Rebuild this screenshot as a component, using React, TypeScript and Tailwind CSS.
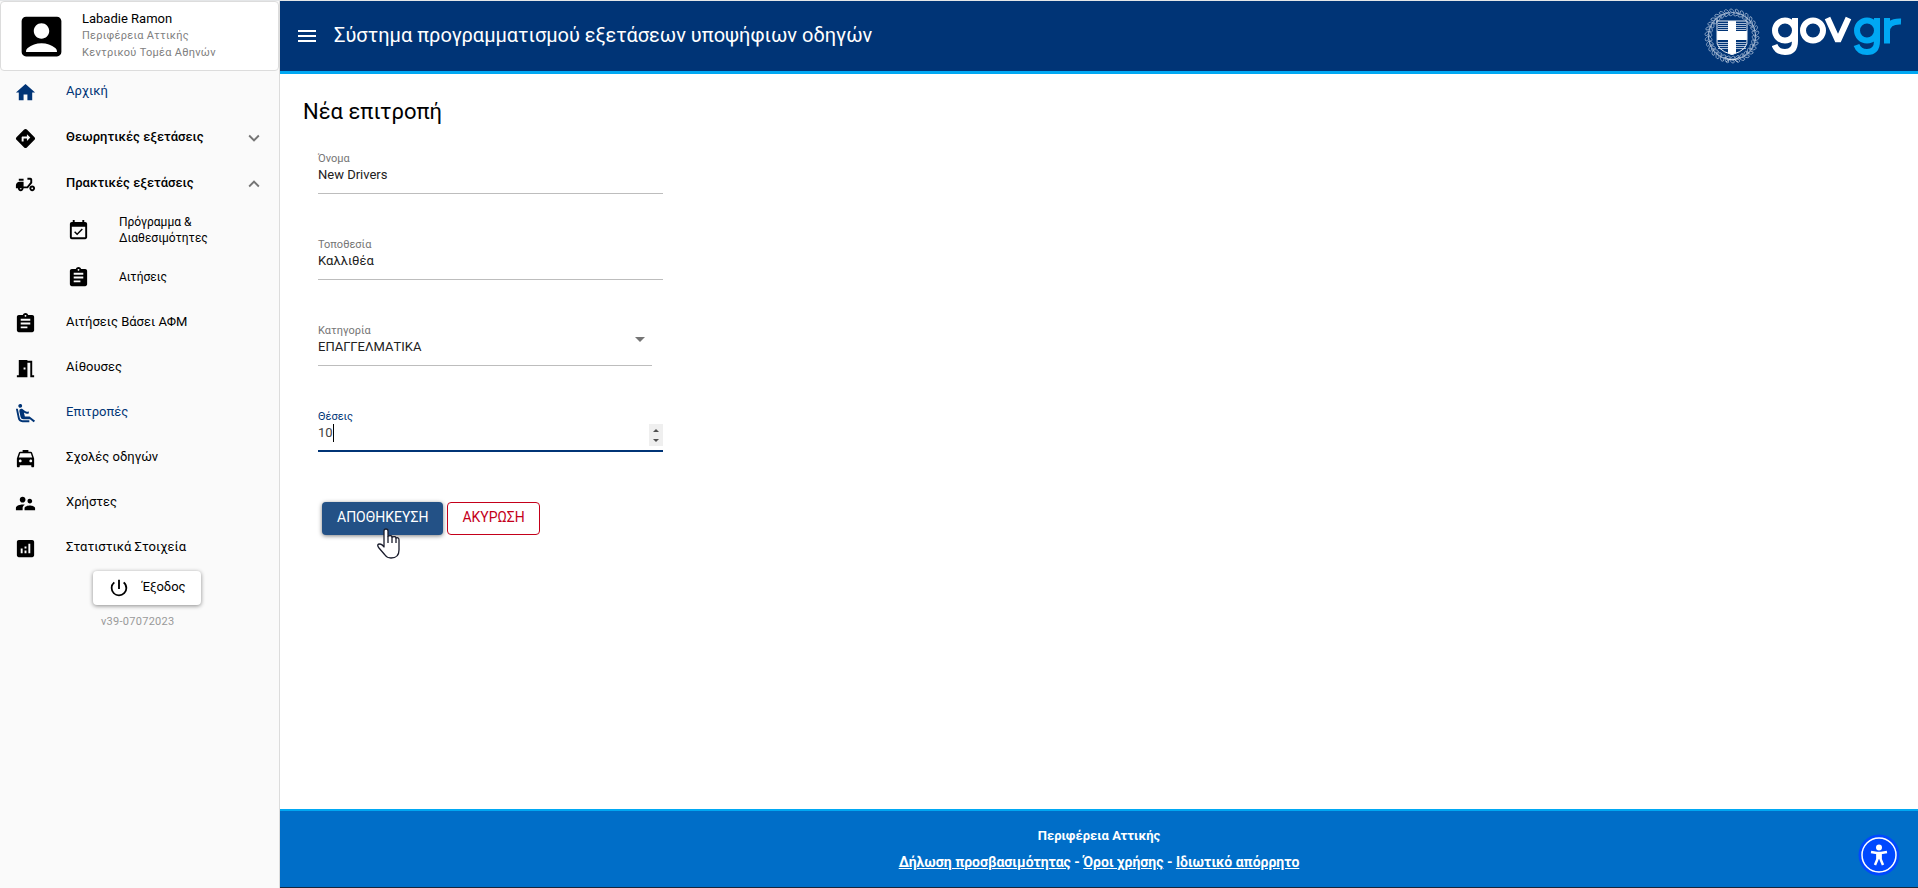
import { useState } from 'react';
import type { ReactNode } from 'react';
import type { IconType } from 'react-icons';
import {
  MdAccountBox, MdAirlineSeatReclineExtra, MdAnalytics, MdAssignment, MdDeliveryDining, MdDirections, MdEventAvailable,
  MdHome, MdKeyboardArrowDown, MdKeyboardArrowUp, MdLocalTaxi, MdMeetingRoom, MdMenu, MdPowerSettingsNew, MdSupervisorAccount,
} from 'react-icons/md';

type NavEntry = { icon: IconType; label: string; active?: boolean };

const mainLinks: NavEntry[] = [
  { icon: MdAssignment, label: 'Αιτήσεις Βάσει ΑΦΜ' },
  { icon: MdMeetingRoom, label: 'Αίθουσες' },
  { icon: MdAirlineSeatReclineExtra, label: 'Επιτροπές', active: true },
  { icon: MdLocalTaxi, label: 'Σχολές οδηγών' },
  { icon: MdSupervisorAccount, label: 'Χρήστες' },
  { icon: MdAnalytics, label: 'Στατιστικά Στοιχεία' },
];

const practicalLinks: NavEntry[] = [
  { icon: MdEventAvailable, label: 'Πρόγραμμα & Διαθεσιμότητες' },
  { icon: MdAssignment, label: 'Αιτήσεις' },
];

function NavLink({ icon: Icon, label, active }: NavEntry) {
  return (
    <a href="#" className={`flex h-[45px] items-center pl-[14px] ${active ? 'text-[#003476]' : 'text-black'}`}>
      <Icon size={23} className="mr-[29px] shrink-0" />
      <span className="pb-1">{label}</span>
    </a>
  );
}

function NavGroup({ icon: Icon, label, open, onToggle }: { icon: IconType; label: string; open: boolean; onToggle: () => void }) {
  const Arrow = open ? MdKeyboardArrowUp : MdKeyboardArrowDown;
  return (
    <button type="button" onClick={onToggle} aria-expanded={open} className="flex h-[46px] w-full items-center pr-[14px] pl-[14px] text-left font-medium">
      <Icon size={23} className="mr-[29px] shrink-0" />
      <span className="grow pb-0.5">{label}</span>
      <Arrow size={22} className="text-[#757575]" />
    </button>
  );
}

function SubLinks() {
  return (
    <>
      {practicalLinks.map(({ icon: Icon, label }) => (
        <a key={label} href="#" className="flex h-[47px] items-center pl-[67px] text-[12px] leading-4">
          <Icon size={23} className="mr-[29px] shrink-0" />
          <span className="w-28 pb-0.5">{label}</span>
        </a>
      ))}
    </>
  );
}

function Sidebar() {
  const [theory, setTheory] = useState(false);
  const [practical, setPractical] = useState(true);

  return (
    <aside className="w-[280px] shrink-0 border-r border-[#dcdcdc] bg-[#fafafa] text-[13px] text-black">
      <div className="flex h-[70px] items-center rounded border border-[#dcdcdc] bg-white pl-[14px]">
        <MdAccountBox size={53} className="mr-[14px] shrink-0" />
        <div className="pb-0.5 text-[11px] leading-[17px] tracking-wide text-[#808080]">
          <p className="text-[13px] tracking-normal text-black">Labadie Ramon</p>
          <p>Περιφέρεια Αττικής</p>
          <p>Κεντρικού Τομέα Αθηνών</p>
        </div>
      </div>
      <nav className="-mt-px">
        <NavLink icon={MdHome} label="Αρχική" active />
        <NavGroup icon={MdDirections} label="Θεωρητικές εξετάσεις" open={theory} onToggle={() => setTheory(!theory)} />
        <NavGroup icon={MdDeliveryDining} label="Πρακτικές εξετάσεις" open={practical} onToggle={() => setPractical(!practical)} />
        {practical && <SubLinks />}
        {mainLinks.map((l) => <NavLink key={l.label} {...l} />)}
      </nav>
      <div className="flex flex-col items-start pl-[93px]">
        <button type="button" className="flex h-[34px] w-[108px] items-center gap-3 rounded-sm bg-white pl-[15px] shadow-[0_1px_4px_rgba(0,0,0,0.45)]">
          <MdPowerSettingsNew size={22} />
          <span className="pb-0.5">Έξοδος</span>
        </button>
        <p className="mt-[9px] pl-2 text-[11px] leading-4 tracking-wide text-[#999]">v39-07072023</p>
      </div>
    </aside>
  );
}

const leaves = Array.from({ length: 30 }, (_, i) => i * 12 + 6);
const stripes = [15, 17, 19, 21, 34, 36, 38, 40];

function Emblem() {
  return (
    <svg width="56" height="56" viewBox="0 0 56 56" aria-hidden="true">
      <g fill="none" stroke="#a9bcd6" strokeWidth="0.7">
        <path d="M24 5A23.500 23.500 0 1 0 32 5" strokeDasharray="4 1" />
        {leaves.map((a) => (
          <g key={a} transform={`rotate(${a} 28 28)`}>
            <path d="M28 4.500q-3-5-5-2.500q0 3 5 2.500zM28 4.500q-3 5-5 3q0-3 5-3z" />
          </g>
        ))}
        <path d="M21 49q7 6 14 0M22 54q6-6 12 0" stroke="#e1e8f1" />
      </g>
      <path d="M13 13h30v20q0 9-15 13.500q-15-4.500-15-13.500z" fill="#003476" />
      <g stroke="#a9bcd6" strokeWidth="1">
        {stripes.map((y) => <path key={y} d={`M14 ${y}.5h28`} />)}
      </g>
      <path d="M24 13h8v10h11v9H32v13.500l-4 1.500l-4-1.500V32H13v-9h11z" fill="#fff" />
      <path d="M43 31q2 11-15 15.500q-17-4.500-15-15.500V13h30z" fill="none" stroke="#e9eef5" />
    </svg>
  );
}

// Geometric wordmark built from rings and stems
function GovLogo() {
  return (
    <svg width="130" height="42" viewBox="0 0 130 42" role="img" aria-label="govgr" fill="none" strokeWidth="6">
      <g stroke="#fff">
        <circle cx="13" cy="15.500" r="10" />
        <path d="M23 3V26q0 11-10 11q-8 0-10.500-7" />
        <circle cx="41" cy="15.500" r="10" />
        <path d="M55.500 3l10.500 23l10.500-23" strokeLinejoin="bevel" />
      </g>
      <g stroke="#00a8f3">
        <circle cx="95" cy="15.500" r="10" />
        <path d="M105 3V26q0 11-10 11q-8 0-10.500-7M115 28.500V3M115 17q0-11 14-10.500" />
      </g>
    </svg>
  );
}

function Header() {
  return (
    <header className="flex h-[73px] items-center border-b-[3px] border-[#00a8f3] bg-[#003476] pr-[16px] pl-[15px] text-white">
      <button type="button" aria-label="Μενού" className="mr-[15px]"><MdMenu size={24} /></button>
      <h1 className="grow pb-0.5 text-[20px] font-normal">Σύστημα προγραμματισμού εξετάσεων υποψήφιων οδηγών</h1>
      <div className="flex items-center gap-[12px]">
        <Emblem />
        <GovLogo />
      </div>
    </header>
  );
}

function Field({ id, label, focused, narrow, children }: { id: string; label: string; focused?: boolean; narrow?: boolean; children: ReactNode }) {
  return (
    <div className="h-[86px]">
      <div className={`relative flex h-[43px] flex-col ${narrow ? 'w-[334px]' : 'w-[345px]'} ${focused ? 'border-b-2 border-[#003476]' : 'border-b border-[#bdbdbd]'}`}>
        <label htmlFor={id} className={`text-[11px] leading-[15px] ${focused ? 'text-[#003476]' : 'text-[#757575]'}`}>{label}</label>
        {children}
      </div>
    </div>
  );
}

const inputClass = 'h-[18px] w-full bg-transparent text-[13px] leading-[18px] text-[#212121] outline-none';

function CommitteeForm() {
  const [seats, setSeats] = useState(10);

  return (
    <form className="mt-[23px] ml-[15px]" onSubmit={(e) => e.preventDefault()}>
      <Field id="name" label="Όνομα">
        <input id="name" defaultValue="New Drivers" className={inputClass} />
      </Field>
      <Field id="place" label="Τοποθεσία">
        <input id="place" defaultValue="Καλλιθέα" className={inputClass} />
      </Field>
      <Field id="category" label="Κατηγορία" narrow>
        <select id="category" className={`${inputClass} appearance-none`}>
          <option>ΕΠΑΓΓΕΛΜΑΤΙΚΑ</option>
        </select>
        <span className="pointer-events-none absolute top-[14px] right-[7px] border-x-[5px] border-t-[5px] border-x-transparent border-t-[#757575]" />
      </Field>
      <Field id="seats" label="Θέσεις" focused>
        <div className="flex items-start">
          <input id="seats" inputMode="numeric" value={seats} onChange={(e) => setSeats(Number(e.target.value) || 0)} className="h-[18px] w-[16px] border-r border-black text-[13px] text-[#424242] outline-none" />
          <span className="grow" />
          <span className="flex h-[22px] w-[14px] flex-col items-center justify-center gap-[2px] bg-[#efefef]">
            <button type="button" aria-label="Αύξηση" onClick={() => setSeats(seats + 1)} className="flex h-[8px] w-full items-center justify-center">
              <span className="border-x-[3px] border-b-[3px] border-x-transparent border-b-[#505050]" />
            </button>
            <button type="button" aria-label="Μείωση" onClick={() => setSeats(seats - 1)} className="flex h-[8px] w-full items-center justify-center">
              <span className="border-x-[3px] border-t-[3px] border-x-transparent border-t-[#505050]" />
            </button>
          </span>
        </div>
      </Field>
      <div className="relative mt-[7px] ml-[4px] flex gap-1 text-[14px]">
        <button type="submit" className="h-[33px] rounded-sm bg-[#235186] px-[15px] pb-[3px] text-white shadow-[0_1px_4px_rgba(0,0,0,0.5)]">ΑΠΟΘΗΚΕΥΣΗ</button>
        <button type="button" className="h-[33px] rounded-sm border border-[#c4001a] px-[14px] pb-[3px] text-[#c4001a]">ΑΚΥΡΩΣΗ</button>
        <HandCursor />
      </div>
    </form>
  );
}

function HandCursor() {
  return (
    <svg width="23" height="31" viewBox="0 0 23 31" className="pointer-events-none absolute top-[26px] left-[55px]" aria-hidden="true">
      <path d="M7 17V3q0-2 2-2t2 2v5q4-1 4 1q4-1 4 1q3-1 3 2v10q0 8-8 8q-4 0-6-3L2 20q-3-4 1-4q2 0 4 3z" fill="#fff" stroke="#191c2c" strokeWidth="1.300" strokeLinejoin="round" />
      <path d="M11 8v7M15 9v6M19 10v5" stroke="#191c2c" strokeWidth="1.300" />
    </svg>
  );
}

function Footer() {
  return (
    <footer className="relative flex h-[79px] flex-col items-center border-t-2 border-b border-t-[#00a8f3] border-b-[#16263c] bg-[#006ec8] pt-[11px] text-[13px] leading-[27px] font-bold text-white">
      <p>Περιφέρεια Αττικής</p>
      <p className="text-[14px] leading-[27px]">
        <a href="#" className="underline">Δήλωση προσβασιμότητας</a> - <a href="#" className="underline">Όροι χρήσης</a> - <a href="#" className="underline">Ιδιωτικό απόρρητο</a>
      </p>
      <button type="button" aria-label="Προσβασιμότητα" className="absolute right-[18px] bottom-[11px]">
        <svg width="42" height="42" viewBox="0 0 42 42" aria-hidden="true">
          <circle cx="21" cy="21" r="20.500" fill="#0048ff" />
          <circle cx="21" cy="21" r="17" fill="none" stroke="#fff" strokeWidth="1.500" />
          <circle cx="21" cy="13.500" r="3" fill="#fff" />
          <path d="M13 18l6 1h4l6-1M19.500 19v6l-2.500 6M22.500 19v6l2.500 6" fill="none" stroke="#fff" strokeWidth="2.500" />
          <path d="M18.500 18h5v7h-5z" fill="#fff" />
        </svg>
      </button>
    </footer>
  );
}

export default function App() {
  return (
    <div className="flex min-h-screen border-t border-[#e4e6e8] bg-white font-['Roboto','Liberation_Sans',sans-serif] text-black">
      <Sidebar />
      <div className="flex grow flex-col">
        <Header />
        <main className="grow pt-[22px] pl-[23px]">
          <h2 className="text-[22px] leading-[32px] font-normal">Νέα επιτροπή</h2>
          <CommitteeForm />
        </main>
        <Footer />
      </div>
    </div>
  );
}
